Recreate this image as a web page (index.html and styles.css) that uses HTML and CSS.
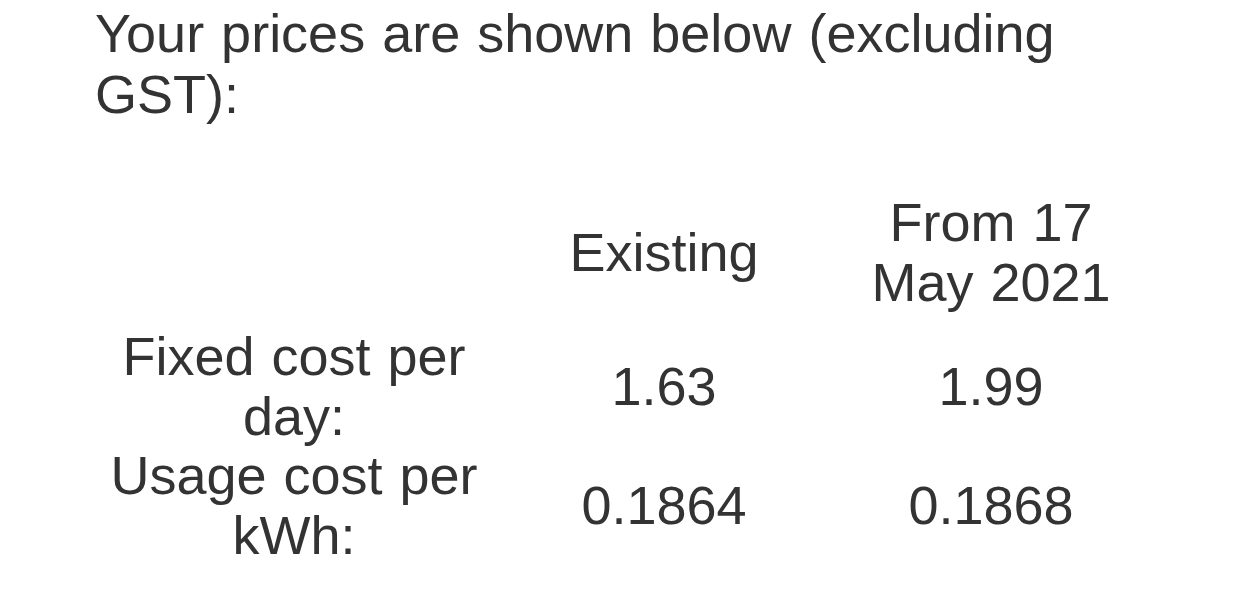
FILE: index.html
```html
<!DOCTYPE html>
<html lang="en">
<head>
<meta charset="utf-8">
<title>Prices</title>
<link rel="stylesheet" href="styles.css">
</head>
<body>
<main class="page">
  <h1 class="intro">Your prices are shown below (excluding GST):</h1>
  <table class="prices">
    <colgroup>
      <col class="col-label">
      <col class="col-existing">
      <col class="col-new">
    </colgroup>
    <thead>
      <tr class="head-row">
        <th></th>
        <th>Existing</th>
        <th>From 17 May 2021</th>
      </tr>
    </thead>
    <tbody>
      <tr>
        <td>Fixed cost per day:</td>
        <td>1.63</td>
        <td>1.99</td>
      </tr>
      <tr>
        <td>Usage cost per kWh:</td>
        <td>0.1864</td>
        <td>0.1868</td>
      </tr>
    </tbody>
  </table>
</main>
</body>
</html>
```

FILE: styles.css
```css
html, body {
  margin: 0;
  padding: 0;
  background: #ffffff;
}

body {
  font-family: "Liberation Sans", Arial, sans-serif;
  color: #333333;
}

.page {
  padding: 3px 95px 0 95px;
  word-spacing: 2px;
}

.intro {
  margin: 0;
  font-size: 54px;
  font-weight: normal;
  line-height: 61px;
}

.prices {
  width: 100%;
  margin-top: 68px;
  border-collapse: collapse;
  table-layout: fixed;
  font-size: 54px;
  line-height: 59.5px;
}

.col-label { width: 398px; }
.col-existing { width: 342px; }
.col-new { width: 312px; }

.prices th,
.prices td {
  padding: 0;
  text-align: center;
  vertical-align: middle;
  font-weight: normal;
}

.head-row th {
  padding-bottom: 15px;
}
```
